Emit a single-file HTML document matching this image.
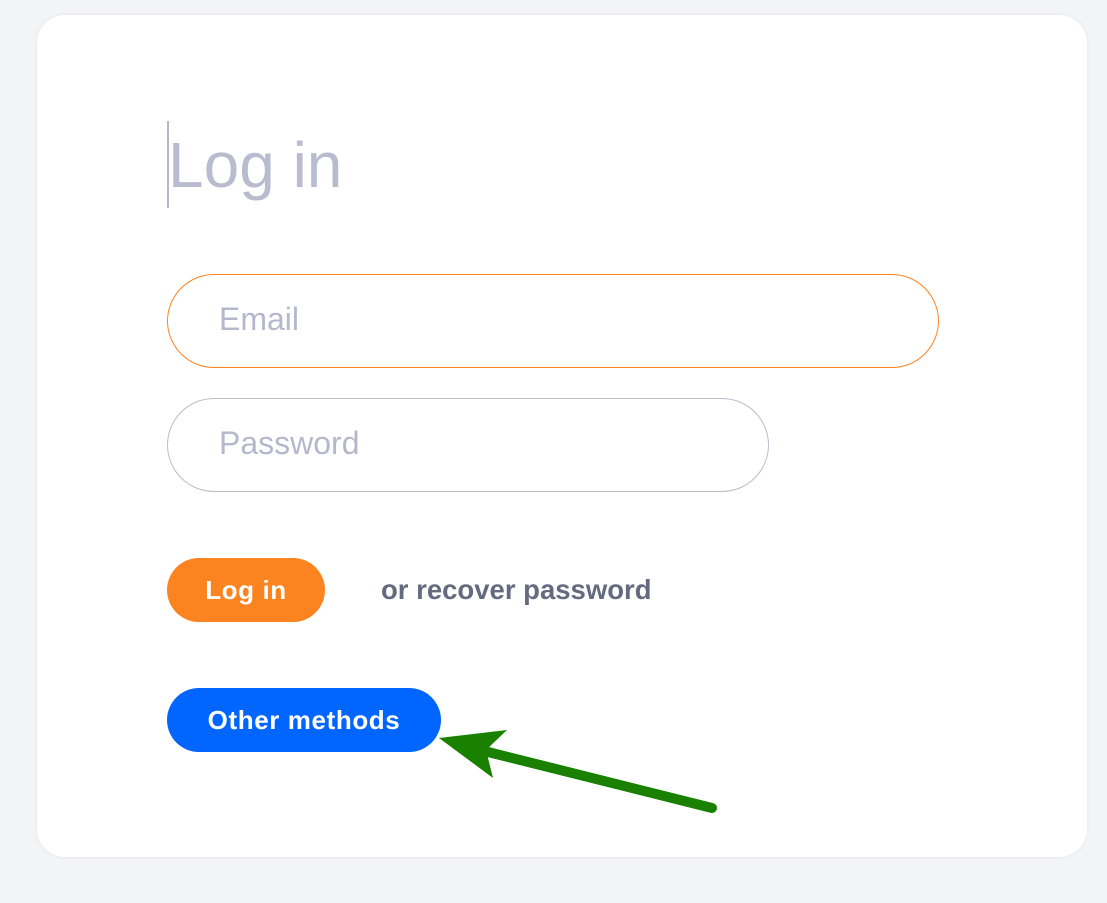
<!DOCTYPE html>
<html><head><style>
html,body{margin:0;padding:0;}
body{width:1107px;height:903px;background:#f3f4f6;position:relative;overflow:hidden;font-family:"Liberation Sans",sans-serif;}
.card{position:absolute;left:37px;top:15px;width:1050px;height:842px;background:#fff;border-radius:28px;box-shadow:0 0 4px rgba(0,0,0,0.06);}
.cursor{position:absolute;left:167px;top:121px;width:2px;height:87px;background:#b5b8cc;}
h1{position:absolute;left:168px;top:120px;margin:0;font-weight:normal;font-size:64px;color:#b9bccf;line-height:90px;}
.inp{position:absolute;left:167px;box-sizing:border-box;height:94px;border-radius:47px;font-size:32px;color:#b5b8cc;padding-left:51px;line-height:88px;background:#fff;}
.btn{position:absolute;left:167px;height:64px;border-radius:32px;color:#fff;font-weight:bold;font-size:26px;line-height:64px;text-align:center;letter-spacing:0.6px;}
</style></head><body>
<div class="card"></div>
<div class="cursor"></div>
<h1>Log in</h1>
<div class="inp" style="top:274px;width:772px;border:1px solid #fb8420;">Email</div>
<div class="inp" style="top:398px;width:602px;border:1px solid #bdbccc;">Password</div>
<div class="btn" style="top:558px;width:158px;background:#fb8420;">Log in</div>
<div style="position:absolute;left:381px;top:571px;font-size:27.5px;color:#656b7f;font-weight:bold;line-height:38px;">or recover password</div>
<div class="btn" style="top:688px;width:274px;background:#0066ff;">Other methods</div>
<svg style="position:absolute;left:0;top:0" width="1107" height="903">
<line x1="488" y1="752" x2="712" y2="808" stroke="#1a8000" stroke-width="10" stroke-linecap="round"/>
<polygon points="439,738 507,730 486,750 493,778" fill="#1a8000"/>
</svg>
</body></html>
